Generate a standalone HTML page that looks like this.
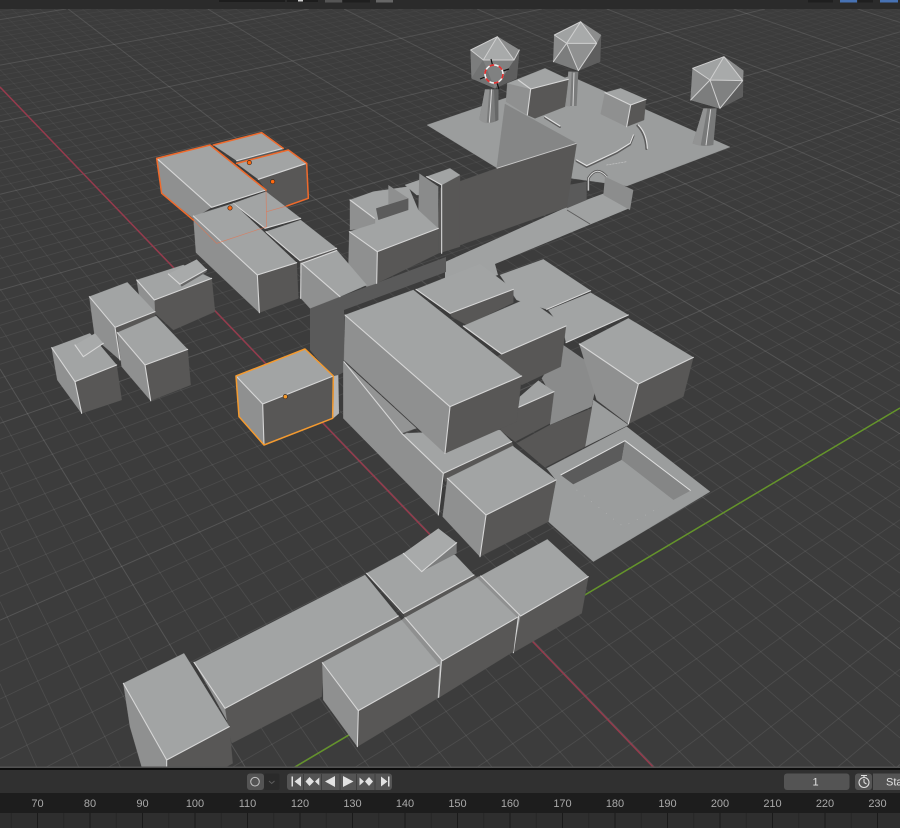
<!DOCTYPE html>
<html><head><meta charset="utf-8"><title>Viewport</title>
<style>
html,body{margin:0;padding:0;background:#3c3c3c;width:900px;height:828px;overflow:hidden}
#wrap{position:relative;width:900px;height:828px;overflow:hidden;contain:strict}
svg{position:absolute;left:0;top:0;display:block;overflow:hidden}
.t{fill:#a2a4a4;stroke:#a2a4a4;stroke-width:1}
.l{fill:#8f9090;stroke:#8f9090;stroke-width:1}
.r{fill:#585756;stroke:#585756;stroke-width:1}
.m{fill:#858686;stroke:#858686;stroke-width:1}
.p{fill:#9b9d9d;stroke:#9b9d9d;stroke-width:1}
.e{fill:none;stroke:#d6d6d6;stroke-width:3.3;stroke-linejoin:round;stroke-linecap:round}
.c{fill:none;stroke:#cfcfcf;stroke-width:3;stroke-linejoin:round;stroke-linecap:round}
.o{fill:none;stroke:#ee6a2c;stroke-width:4.6;stroke-linejoin:round;stroke-linecap:round}
.y{fill:none;stroke:#f39a30;stroke-width:4.6;stroke-linejoin:round;stroke-linecap:round}
.lab{font:11px "Liberation Sans",sans-serif;fill:#a9a9a9;text-anchor:middle}
.ico polygon{stroke-width:1.5}
</style></head><body>
<div id="wrap">
<svg width="900" height="828" viewBox="0 0 900 828" xmlns="http://www.w3.org/2000/svg" style="filter:blur(.35px)">
<defs>
<pattern id="tk" patternUnits="userSpaceOnUse" x="37" y="0" width="52.5" height="30">
<rect x="0" y="0" width="1" height="30" fill="#1a1a1a"/>
<rect x="26.25" y="0" width="1" height="30" fill="#262626"/>
</pattern>
</defs>
<rect width="900" height="828" fill="#3c3c3c"/>
<g id="grid" fill="none"></g>
<line x1="0" y1="87" x2="655" y2="769" stroke="#963a4c" stroke-width="1.5"/>
<line x1="295" y1="767" x2="900" y2="408" stroke="#64942a" stroke-width="1.5"/>

<!-- back plane with trees -->
<g transform="translate(420 0) scale(.33333)">
<polygon class="p" points="21,375 450,228 930,441 621,558 231,504"/>
<g fill="none" stroke="#e0e0e0" stroke-width="3.5" stroke-linecap="round">
<path d="M470,480 L500,497 L590,455 L630,430 L640,405" stroke="#5c5c5c" stroke-width="7" transform="translate(0 3)"/>
<path d="M470,480 L500,497 L590,455 L630,430 L640,405"/>
<path d="M655,375 Q680,400 682,445" stroke="#5c5c5c" stroke-width="6" transform="translate(-3 2)"/>
<path d="M655,375 Q680,400 682,445"/>
<path d="M375,350 L420,378" stroke="#5c5c5c" stroke-width="6" transform="translate(0 3)"/>
<path d="M375,350 L420,378"/>
<path d="M560,495 L620,485" stroke="#c4c4c4" stroke-width="2" stroke-dasharray="5 4"/>
</g>
<!-- trunks -->
<path d="M195,268 L235,268 L235,360 Q205,378 178,358 Z" fill="#7a7b7b"/>
<path d="M195,268 L208,268 L200,370 Q185,367 178,358 Z" fill="#929393"/>
<path d="M222,268 L226,364 Q232,362 235,360 L235,268 Z" fill="#666767"/>
<path d="M215,268 L208,368" stroke="#d4d4d4" stroke-width="3" fill="none"/>
<path d="M445,215 L475,215 L470,318 L438,318 Z" fill="#7a7b7b"/>
<path d="M445,215 L455,215 L450,320 L438,318 Z" fill="#929393"/>
<path d="M462,218 L459,318" stroke="#d4d4d4" stroke-width="3" fill="none"/>
<path d="M850,325 L890,325 L880,435 Q850,442 818,430 Z" fill="#787979"/>
<path d="M850,325 L862,325 L842,437 Q830,436 818,430 Z" fill="#929393"/>
<path d="M872,328 L858,436" stroke="#d4d4d4" stroke-width="3" fill="none"/>
<!-- tree 1 -->
<g class="ico">
<polygon points="152,150 232,110 298,150 290,235 225,265 155,235" fill="#6e6f6f"/>
<polygon points="282,180 298,150 290,235 225,265" fill="#5e5e5e" stroke="#5e5e5e"/>
<polygon points="152,150 232,110 190,180" fill="#a0a2a2" stroke="#a0a2a2"/>
<polygon points="232,110 282,180 190,180" fill="#a8aaaa" stroke="#a8aaaa"/>
<polygon points="232,110 298,150 282,180" fill="#8c8d8d" stroke="#8c8d8d"/>
<polygon points="152,150 190,180 155,235" fill="#7c7d7d" stroke="#7c7d7d"/>
<polygon points="190,180 225,265 155,235" fill="#727373" stroke="#727373"/>
<polygon points="190,180 282,180 225,265" fill="#808181" stroke="#808181"/>
</g>
<path class="c" d="M152,150 L190,180 L232,110 L282,180 L190,180 M282,180 L298,150 M232,110 L152,150"/>
<!-- tree 2 -->
<g class="ico">
<polygon points="403,105 482,65 543,105 540,185 475,212 400,185" fill="#7a7b7b"/>
<polygon points="530,130 543,105 540,185 475,212" fill="#5e5e5e" stroke="#5e5e5e"/>
<polygon points="403,105 482,65 440,130" fill="#a0a2a2" stroke="#a0a2a2"/>
<polygon points="482,65 530,130 440,130" fill="#a8aaaa" stroke="#a8aaaa"/>
<polygon points="482,65 543,105 530,130" fill="#8c8d8d" stroke="#8c8d8d"/>
<polygon points="403,105 440,130 400,185" fill="#8b8c8c" stroke="#8b8c8c"/>
<polygon points="440,130 475,212 400,185" fill="#7c7d7d" stroke="#7c7d7d"/>
<polygon points="440,130 530,130 475,212" fill="#909191" stroke="#909191"/>
</g>
<path class="c" d="M403,105 L482,65 L530,130 L440,130 L482,65 M403,105 L440,130 L475,212 L530,130 M440,130 L400,185"/>
<!-- tree 3 -->
<g class="ico">
<polygon points="818,205 912,170 970,212 968,290 900,325 812,300" fill="#7a7b7b"/>
<polygon points="968,242 970,212 968,290 900,325" fill="#5e5e5e" stroke="#5e5e5e"/>
<polygon points="818,205 912,170 870,240" fill="#a0a2a2" stroke="#a0a2a2"/>
<polygon points="912,170 968,242 870,240" fill="#a8aaaa" stroke="#a8aaaa"/>
<polygon points="912,170 970,212 968,242" fill="#8c8d8d" stroke="#8c8d8d"/>
<polygon points="818,205 870,240 812,300" fill="#8b8c8c" stroke="#8b8c8c"/>
<polygon points="870,240 900,325 812,300" fill="#7c7d7d" stroke="#7c7d7d"/>
<polygon points="870,240 968,242 900,325" fill="#808181" stroke="#808181"/>
</g>
<path class="c" d="M818,205 L912,170 L968,242 L870,240 L912,170 M818,205 L870,240 L900,325 L968,242 M870,240 L812,300"/>
<!-- box A -->
<polygon class="r" points="332,267 445,238 435,320 345,355 322,345"/>
<polygon class="l" points="262,250 332,267 322,345 258,305"/>
<polygon class="t" points="262,250 375,205 445,238 332,267"/>
<path class="e" d="M295,240 L332,267 L445,238 M332,267 L322,345"/>
<!-- box B -->
<polygon class="r" points="632,315 678,298 672,360 620,380"/>
<polygon class="l" points="555,278 632,315 620,380 542,342"/>
<polygon class="t" points="555,278 602,265 678,298 632,315"/>
<path class="e" d="M555,278 L632,315 L678,298 M632,315 L620,380"/>
<!-- arch -->
<path d="M505,572 L505,535 Q530,495 560,530" fill="none" stroke="#5a5a5a" stroke-width="8"/>
<path d="M505,572 L505,535 Q530,495 560,530" fill="none" stroke="#d6d6d6" stroke-width="3"/>
</g>

<!-- walkway -->
<polygon points="567,207 605,193 630,208 495,264 498,275 445,292 445,262" fill="#a0a2a2"/>
<path d="M567,210 L590,224" stroke="#5d5d5d" stroke-width="1" fill="none"/>
<path d="M605,193 L630,208" stroke="#777" stroke-width="1"/>

<g transform="translate(420 0) scale(.33333)">
<!-- small box -->
<polygon points="555,530 640,570 630,630 550,585" fill="#8c8d8d"/>
<polygon points="445,555 500,545 500,600 440,625" fill="#5a5a5a"/>
<!-- wedge and wall -->
<polygon class="m" points="255,312 470,430 230,505"/>
<polygon class="r" points="60,565 230,505 470,430 440,622 50,760"/>
<path d="M230,505 L470,430" stroke="#c8c8c8" stroke-width="3" fill="none"/>
</g>

<!-- mid back pieces -->
<g transform="translate(140 120) scale(.33333)">
<polygon class="t" points="630,240 700,215 805,200 860,330 700,320"/>
<polygon class="l" points="630,240 705,295 705,320 630,330"/>
<polygon class="t" points="795,195 838,180 838,225 830,225"/>
<polygon points="745,195 805,235 805,265 745,252" fill="#8e8f8f"/>
<polygon points="708,265 805,235 805,270 715,300" fill="#5b5b5b"/>
<polygon points="838,160 895,200 895,325 835,270" fill="#8a8b8b"/>
<polygon class="r" points="905,195 960,165 960,380 895,400"/>
<polygon class="t" points="860,170 930,145 960,165 905,195"/>
<path class="e" d="M630,240 L703,295 M860,170 L905,195 L905,400"/>
</g>

<!-- central complex back -->
<g transform="translate(330 250) scale(.33333)">
<polygon class="p" points="650,655 890,530 1140,725 790,935 655,815 678,690"/>
<polygon points="692,675 885,572 875,630 730,703" fill="#5b5b5b"/>
<polygon points="885,572 1082,722 1030,750 875,630" fill="#858686"/>
<polygon points="730,703 875,630 1030,750 880,835" fill="#9b9d9d"/>
<path d="M692,675 L885,572 L1082,722" stroke="#e0e0e0" stroke-width="3" fill="none"/>
<path d="M740,720 L880,830 L985,775" stroke="#bdbdbd" stroke-width="2" stroke-dasharray="2 26" fill="none"/>
<polygon class="p" points="790,450 895,525 765,590"/>
<polygon class="t" points="510,75 640,28 782,122 650,178 560,150"/>
<path class="e" d="M650,178 L782,122" />
<polygon class="t" points="655,180 782,128 895,195 708,278 700,240"/>
<path class="e" d="M708,278 L895,195"/>
<polygon points="700,285 808,360 785,470 660,525 660,430 635,385" fill="#8a8b8b"/>
<polygon class="r" points="560,580 660,525 785,475 765,590 645,652"/>
<polygon class="r" points="925,402 1090,322 1060,440 895,522"/>
<polygon class="l" points="748,282 925,402 895,522 800,450"/>
<polygon class="t" points="748,282 895,205 1090,322 925,402"/>
<path class="e" d="M748,282 L925,402 L1090,322 M925,402 L895,522"/>
<polygon class="r" points="565,472 672,425 660,520 555,575 510,540"/>
<polygon class="t" points="570,440 625,392 672,425 565,472"/>
<path class="e" d="M565,472 L672,425"/>
</g>

<!-- dark base -->
<polygon points="310,308 446,257 446,272 344,310 344,372 333,378 310,350" fill="#5a5a5a"/>

<g transform="translate(140 120) scale(.33333)">
<polygon class="r" points="712,395 895,325 895,400 710,490"/>
<polygon class="l" points="628,335 712,395 710,490 680,500 625,450"/>
<polygon class="t" points="628,335 835,270 895,325 712,395"/>
<path class="e" d="M628,335 L712,395 L895,325 M712,395 L710,490"/>
</g>

<g transform="translate(330 250) scale(.33333)">
<polygon class="r" points="360,190 550,118 550,158 410,225 365,200"/>
<polygon class="t" points="258,118 450,42 550,118 360,190"/>
<path class="e" d="M258,118 L360,190 L550,118"/>
<polygon class="r" points="515,312 708,228 692,350 575,405 500,320"/>
<polygon class="t" points="400,228 592,145 708,228 515,312"/>
<path class="e" d="M400,228 L515,312 L708,228"/>
<!-- base R -->
<polygon class="l" points="40,335 340,670 325,795 40,505"/>
<polygon class="t" points="215,550 510,540 545,575 340,670"/>
<polygon class="r" points="340,670 545,575 552,592 345,695"/>
<polygon points="42,335 260,535 215,550" fill="#939494"/>
<polygon points="215,550 258,535 222,553" fill="#555"/>
<path class="e" d="M42,335 L215,550 L340,670 L545,575 M340,670 L325,795"/>
<!-- H -->
<polygon class="r" points="360,470 575,378 560,515 345,610"/>
<polygon class="l" points="45,195 360,470 345,610 42,330"/>
<polygon class="t" points="45,195 250,120 575,378 360,470"/>
<path class="e" d="M45,195 L360,470 L575,378 M360,470 L345,610"/>
<!-- S -->
<polygon class="r" points="468,795 678,690 655,815 450,920"/>
<polygon class="l" points="352,685 468,795 450,920 338,800"/>
<polygon class="t" points="352,685 548,588 678,690 468,795"/>
<path class="e" d="M352,685 L468,795 L678,690 M468,795 L450,920"/>
</g>

<!-- selected and rows -->
<g transform="translate(140 120) scale(.33333)">
<polygon points="220,75 365,38 430,85 430,92 290,130 290,122" fill="#5a5a5a"/>
<polygon class="t" points="220,75 365,38 430,85 290,122"/>
<path class="e" d="M290,122 L430,85"/>
<polygon class="r" points="355,178 500,130 505,235 440,258 382,275 378,210"/>
<polygon class="t" points="290,130 445,90 500,130 355,178"/>
<path class="e" d="M355,178 L500,130"/>
<polygon class="l" points="50,115 215,262 160,295 65,220"/>
<polygon class="t" points="50,115 210,75 378,210 215,262"/>
<path class="e" d="M50,115 L215,262 L378,210"/>
<!-- Cb -->
<polygon class="t" points="280,250 378,215 482,295 375,325"/>
<path class="e" d="M280,250 L375,325 L482,295"/>
<!-- D -->
<polygon class="t" points="378,335 482,300 590,385 480,422"/>
<polygon class="r" points="480,422 590,388 590,420 480,460"/>
<path class="e" d="M378,335 L480,422 L590,385"/>
<!-- C -->
<polygon class="r" points="352,465 470,428 475,535 358,578"/>
<polygon class="l" points="160,288 352,465 358,578 168,398"/>
<polygon class="t" points="160,288 280,250 470,428 352,465"/>
<path class="e" d="M160,288 L352,465 L470,428 M352,465 L358,578"/>
<!-- E -->
<polygon class="l" points="485,430 600,530 510,565 483,535"/>
<polygon class="t" points="485,430 590,390 680,495 600,530"/>
<path class="e" d="M485,430 L600,530 M485,430 L590,392 M483,430 L482,535"/>
<!-- outlines -->
<path d="M160,300 L230,370 L380,320 L378,210 M380,275 L440,258" fill="none" stroke="#e9714a" stroke-width="2" stroke-opacity=".7"/>
<path class="o" d="M50,115 L210,75 L378,210 M50,115 L65,220 L160,300"/>
<path class="o" d="M220,75 L365,38 L430,85 M290,130 L445,90 L500,130 L505,235 L440,258"/>
<circle cx="328" cy="128" r="6.5" fill="#ff6a10" stroke="#3a2a20" stroke-width="2"/>
<circle cx="398" cy="185" r="6.5" fill="#ff6a10" stroke="#3a2a20" stroke-width="2"/>
<circle cx="270" cy="264" r="6.5" fill="#ff6a10" stroke="#3a2a20" stroke-width="2"/>
</g>

<!-- left cluster -->
<g transform="translate(40 250) scale(.33333)">
<polygon class="r" points="343,150 515,85 525,185 400,240 345,190"/>
<polygon class="l" points="290,90 343,150 345,190 300,150"/>
<polygon class="t" points="290,90 430,45 515,85 343,150"/>
<path class="e" d="M290,90 L343,150 L515,85"/>
<polygon points="420,103 500,58 500,66 425,110" fill="#666"/>
<polygon points="385,72 470,28 500,58 420,103" fill="#a8aaaa"/>
<path class="e" d="M385,72 L420,103 L500,58"/>
<polygon class="r" points="225,232 345,185 345,230 240,330"/>
<polygon class="l" points="148,140 225,232 240,330 165,265"/>
<polygon class="t" points="148,140 262,97 345,185 225,232"/>
<path class="e" d="M148,140 L225,232 L345,185 M225,232 L240,330"/>
<polygon class="r" points="315,345 443,298 452,405 332,452"/>
<polygon class="l" points="232,248 315,345 332,452 245,350"/>
<polygon class="t" points="232,248 348,198 443,298 315,345"/>
<path class="e" d="M232,248 L315,345 L443,298 M315,345 L332,452"/>
<polygon class="r" points="105,395 230,345 245,450 125,490"/>
<polygon class="l" points="35,293 105,395 125,490 52,390"/>
<polygon class="t" points="35,293 150,250 230,345 105,395"/>
<path class="e" d="M35,293 L105,395 L230,345 M105,395 L125,490"/>
<polygon points="105,285 165,250 190,280 130,320" fill="#a8aaaa"/>
<path class="e" d="M105,285 L130,320 L190,280"/>
<!-- selected cube -->
<polygon points="882,378 895,375 897,490 880,505" fill="#b4b4b4"/>
<polygon class="r" points="668,462 880,378 878,505 672,585"/>
<polygon class="l" points="588,378 668,462 672,585 597,500"/>
<polygon class="t" points="588,378 795,297 880,378 668,462"/>
<path class="e" d="M588,378 L668,462 L880,378 M668,462 L672,585"/>
<path class="y" d="M588,378 L795,297 L880,378 L878,505 L672,585 L597,500 Z"/>
<circle cx="736" cy="440" r="6.5" fill="#f59a2a" stroke="#3a2a20" stroke-width="2"/>
</g>

<!-- front row -->
<g transform="translate(110 530) scale(.33333)">
<polygon class="l" points="1112,138 1232,258 1210,368 1222,262 1100,142"/>
<polygon class="r" points="1232,258 1435,140 1415,250 1210,368"/>
<polygon class="t" points="1112,138 1312,28 1435,140 1232,258"/>
<path class="e" d="M1112,138 L1232,258 L1435,140 M1226,258 L1210,368"/>
<polygon class="l" points="885,262 997,392 986,502 982,505 988,405 875,270"/>
<polygon class="r" points="997,392 1222,262 1210,365 988,502"/>
<polygon class="t" points="885,262 1100,142 1222,262 997,392"/>
<path class="e" d="M885,262 L997,392 L1222,262 M994,392 L986,502"/>
<polygon class="r" points="880,250 1092,135 1102,142 885,262"/>
<polygon class="t" points="770,130 880,70 1035,75 1092,135 880,250"/>
<path class="e" d="M770,130 L880,250 L1092,135"/>
<polygon points="935,125 1040,38 1040,70" fill="#7c7d7d"/>
<polygon points="880,70 985,-5 1040,38 935,125" fill="#a8aaaa"/>
<path class="e" d="M880,70 L935,125 L1040,38"/>
<polygon class="r" points="345,535 865,258 875,270 640,400 635,500 365,640 350,570"/>
<polygon class="l" points="252,397 345,535 350,570 300,480"/>
<polygon class="t" points="252,397 765,135 865,258 345,535"/>
<path class="e" d="M252,397 L345,535 L865,258"/>
<polygon class="l" points="40,460 170,690 170,710 95,710 60,590"/>
<polygon class="r" points="170,690 358,590 368,700 350,710 170,710"/>
<polygon class="t" points="40,460 222,370 358,590 170,690"/>
<path class="e" d="M40,460 L170,690 L358,590 M170,690 L170,710"/>
<polygon class="r" points="745,542 988,405 982,505 742,650"/>
<polygon class="l" points="637,398 745,542 742,650 640,510"/>
<polygon class="t" points="637,398 875,270 988,405 745,542"/>
<path class="e" d="M637,398 L745,542 L988,405 M745,542 L742,650"/>
</g>

<!-- 3D cursor -->
<g transform="translate(494 74)" fill="none">
<g stroke="#111" stroke-width="1.2"><path d="M-3,-15 L-1.5,-9 M9,-3 L15,-5 M-9,3 L-14,5 M3,9 L5,15"/></g>
<circle r="9" stroke="#f0f0f0" stroke-width="1.6"/>
<circle r="9" stroke="#e03030" stroke-width="1.7" stroke-dasharray="4.7 4.7"/>
</g>

<!-- top bar -->
<rect x="0" y="0" width="900" height="9" fill="#2b2b2b"/>
<rect x="219" y="0" width="66" height="2" fill="#1d1d1d"/>
<rect x="287" y="0" width="31" height="2" fill="#1d1d1d"/>
<rect x="298" y="0" width="5" height="1.5" fill="#cfcfcf"/>
<rect x="325" y="0" width="17" height="2.5" fill="#555"/>
<rect x="343" y="0" width="27" height="2.5" fill="#1f1f1f"/>
<rect x="376" y="0" width="17" height="2.5" fill="#666"/>
<rect x="808" y="0" width="25" height="2.5" fill="#1f1f1f"/>
<rect x="840" y="0" width="17" height="2.5" fill="#4772b3"/>
<rect x="858" y="0" width="15" height="2.5" fill="#1f1f1f"/>
<rect x="880" y="0" width="18" height="2.5" fill="#4772b3"/>

<!-- timeline -->
<rect x="0" y="766.5" width="900" height="1.4" fill="#555"/>
<rect x="0" y="768" width="900" height="2.5" fill="#0d0d0d"/>
<rect x="0" y="770" width="900" height="23" fill="#303030"/>
<rect x="0" y="793" width="900" height="20" fill="#1d1d1d"/>
<rect x="0" y="813" width="900" height="15" fill="#2e2e2e"/>
<rect x="0" y="813" width="900" height="15" fill="url(#tk)"/>

<rect x="247" y="773.5" width="17" height="16.5" rx="3" fill="#545454"/>
<circle cx="255" cy="781.7" r="4.3" fill="none" stroke="#c4c4c4" stroke-width="1"/>
<rect x="264" y="773.5" width="15.5" height="16.5" rx="2" fill="#2a2a2a"/>
<path d="M269,781 L271.7,783.5 L274.5,781" fill="none" stroke="#5d5d5d" stroke-width="1"/>
<rect x="287" y="773.5" width="105" height="16.5" rx="3" fill="#545454"/>
<g stroke="#3e3e3e" stroke-width="1"><path d="M303.5,774V790M321.5,774V790M340,774V790M356.5,774V790M375,774V790"/></g>
<g fill="#e2e2e2">
<rect x="291.5" y="776.5" width="1.5" height="10"/><polygon points="301,776.5 301,786.5 294.5,781.5"/>
<polygon points="309.5,777 314,781.5 309.5,786 305.5,781.5"/><polygon points="319.3,777.5 319.3,785.5 315,781.5"/>
<polygon points="335,776 335,787 325,781.5"/>
<polygon points="343,776 343,787 353.5,781.5"/>
<polygon points="359.5,777.5 359.5,785.5 364,781.5"/><polygon points="369,777 373,781.5 369,786 365,781.5"/>
<polygon points="381,776.5 381,786.5 387.5,781.5"/><rect x="388" y="776.5" width="1.5" height="10"/>
</g>
<rect x="784" y="773.5" width="65.5" height="16.5" rx="3" fill="#545454"/>
<text x="815.5" y="785.5" style="font:11px 'Liberation Sans',sans-serif;fill:#e2e2e2;text-anchor:middle">1</text>
<rect x="855" y="773.5" width="17" height="16.5" rx="3" fill="#545454"/>
<g fill="none" stroke="#dedede" stroke-width="1.1"><circle cx="864" cy="782.5" r="5"/><path d="M861,775.5 H867 M864,776 V777.5 M864,782.5 V779 M864,782.5 L866.5,784"/></g>
<rect x="873" y="773.5" width="27" height="16.5" fill="#545454"/>
<text x="886" y="785.5" style="font:11px 'Liberation Sans',sans-serif;fill:#e2e2e2">Sta</text>

<g>
<text class="lab" x="37.5" y="807">70</text>
<text class="lab" x="90" y="807">80</text>
<text class="lab" x="142.5" y="807">90</text>
<text class="lab" x="195" y="807">100</text>
<text class="lab" x="247.5" y="807">110</text>
<text class="lab" x="300" y="807">120</text>
<text class="lab" x="352.5" y="807">130</text>
<text class="lab" x="405" y="807">140</text>
<text class="lab" x="457.5" y="807">150</text>
<text class="lab" x="510" y="807">160</text>
<text class="lab" x="562.5" y="807">170</text>
<text class="lab" x="615" y="807">180</text>
<text class="lab" x="667.5" y="807">190</text>
<text class="lab" x="720" y="807">200</text>
<text class="lab" x="772.5" y="807">210</text>
<text class="lab" x="825" y="807">220</text>
<text class="lab" x="877.5" y="807">230</text>
</g>
</svg>
</div>
<script>
(function(){
var O=[523.6,631],V1=[-483,-415],V2=[2132,-322],a=.194,b=.1416;
var g=document.getElementById('grid');
var NS='http://www.w3.org/2000/svg';
function W(u,v){return 1+a*u+b*v;}
function P(u,v){var w=W(u,v);return [(O[0]+a*u*V1[0]+b*v*V2[0])/w,(O[1]+a*u*V1[1]+b*v*V2[1])/w];}
function clip(A,B){
  var t0=0,t1=1,dx=B[0]-A[0],dy=B[1]-A[1];
  var p=[-dx,dx,-dy,dy],q=[A[0],900-A[0],A[1]-9,768-A[1]];
  for(var k=0;k<4;k++){
    if(p[k]===0){if(q[k]<0)return null;continue;}
    var r=q[k]/p[k];
    if(p[k]<0){if(r>t1)return null;if(r>t0)t0=r;}
    else{if(r<t0)return null;if(r<t1)t1=r;}
  }
  if(t1<=t0)return null;
  return [[A[0]+t0*dx,A[1]+t0*dy],[A[0]+t1*dx,A[1]+t1*dy]];
}
function seg(A,B,op,sw){
  var c=clip(A,B);if(!c)return;
  var l=document.createElementNS(NS,'line');
  l.setAttribute('x1',c[0][0].toFixed(1));l.setAttribute('y1',c[0][1].toFixed(1));
  l.setAttribute('x2',c[1][0].toFixed(1));l.setAttribute('y2',c[1][1].toFixed(1));
  l.setAttribute('stroke','#fff');l.setAttribute('stroke-opacity',op.toFixed(3));l.setAttribute('stroke-width',sw);
  g.appendChild(l);
}
function minorOp(w){return Math.max(.016,Math.min(.085,.09-.032*(w-.7)));}
function majorOp(w){return Math.max(.07,Math.min(.13,.14-.018*(w-.7)));}
var i,t,s=.5;
for(i=-25;i<=100;i++){
  var c=i/10,maj=(i%10===0);
  for(t=-4;t<10;t+=s){
    if(W(c,t)>.08&&W(c,t+s)>.08){
      var w=W(c,t+s/2);
      seg(P(c,t),P(c,t+s),maj?majorOp(w):minorOp(w),maj?1:.9);
    }
    if(W(t,c)>.08&&W(t+s,c)>.08){
      var w2=W(t+s/2,c);
      seg(P(t,c),P(t+s,c),maj?majorOp(w2):minorOp(w2),maj?1:.9);
    }
  }
}
})();
</script>
</body></html>
